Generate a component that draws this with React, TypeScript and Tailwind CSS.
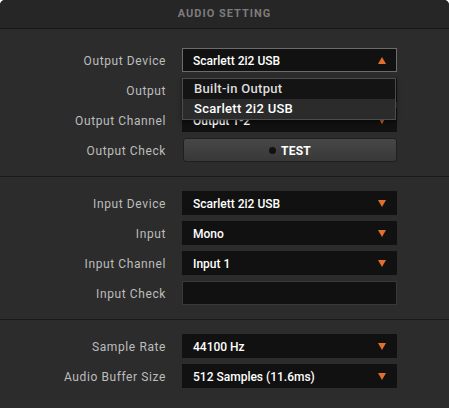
import React from "react";

const font = { fontFamily: "Roboto, 'Noto Sans', sans-serif" };

function Arrow({ up = false }: { up?: boolean }) {
  return (
    <svg width="8" height="7" viewBox="0 0 8 7" className="shrink-0">
      {up ? (
        <polygon points="4,0 8,7 0,7" fill="#e2702a" />
      ) : (
        <polygon points="0,0 8,0 4,7" fill="#e2702a" />
      )}
    </svg>
  );
}

function Label({ children }: { children: React.ReactNode }) {
  return (
    <div className="w-[166px] shrink-0 pt-[1px] text-right text-[12px] tracking-[0.6px] text-[#bdbdbd]">
      {children}
    </div>
  );
}

function Select({ value, open = false }: { value: string; open?: boolean }) {
  return (
    <div
      className={
        open
          ? "ml-[16px] flex h-[24px] w-[215px] items-center justify-between border border-[#6c6c6c] bg-[#111111] pl-[10px] pr-[10px]"
          : "ml-[16px] flex h-[24px] w-[215px] items-center justify-between bg-[#111111] pl-[11px] pr-[11px]"
      }
    >
      <span className="pt-[1px] text-[12px] font-medium text-white">{value}</span>
      <Arrow up={open} />
    </div>
  );
}

function Row({ label, children }: { label: string; children: React.ReactNode }) {
  return (
    <div className="flex h-[24px] items-center">
      <Label>{label}</Label>
      {children}
    </div>
  );
}

export default function App() {
  return (
    <div className="relative h-[408px] w-[449px] overflow-hidden rounded-t-[5px] bg-[#2c2c2c]" style={font}>
      <div className="flex h-[29px] items-center justify-center border-b border-[#171717] bg-[#262626]">
        <span className="pt-[1px] text-[11px] font-bold tracking-[1px] text-[#7c7c7c]">AUDIO SETTING</span>
      </div>

      <div className="flex flex-col gap-[6px] pt-[19px] pb-[14px]">
        <Row label="Output Device">
          <Select value="Scarlett 2i2 USB" open />
        </Row>
        <Row label="Output">
          <Select value="" />
        </Row>
        <Row label="Output Channel">
          <Select value="Output 1-2" />
        </Row>
        <div className="flex h-[24px] items-center">
          <Label>Output Check</Label>
          <button className="ml-[17px] flex h-[24px] w-[214px] items-center justify-center gap-[5px] rounded-[3px] border border-[#1f1f1f] bg-gradient-to-b from-[#474747] to-[#383838]">
            <span className="h-[7px] w-[7px] rounded-full bg-[#111111]" />
            <span className="pt-[1px] text-[12px] font-bold tracking-[0.3px] text-white">TEST</span>
          </button>
        </div>
      </div>

      <div className="border-t border-[#191919]" />

      <div className="flex flex-col gap-[6px] pt-[14px] pb-[14px]">
        <Row label="Input Device">
          <Select value="Scarlett 2i2 USB" />
        </Row>
        <Row label="Input">
          <Select value="Mono" />
        </Row>
        <Row label="Input Channel">
          <Select value="Input 1" />
        </Row>
        <Row label="Input Check">
          <div className="ml-[16px] h-[24px] w-[215px] border border-[#393939] bg-[#111111]" />
        </Row>
      </div>

      <div className="border-t border-[#191919]" />

      <div className="flex flex-col gap-[6px] pt-[14px]">
        <Row label="Sample Rate">
          <Select value="44100 Hz" />
        </Row>
        <Row label="Audio Buffer Size">
          <Select value="512 Samples (11.6ms)" />
        </Row>
      </div>

      <div className="absolute left-[182px] top-[78px] w-[214px] border border-[#4c4c4c] shadow-[0_2px_4px_rgba(0,0,0,0.5)]">
        <div className="flex h-[20px] items-center bg-[#141414] pl-[11px] text-[13px] font-medium tracking-[0.3px] text-[#dcdcdc]">
          Built-in Output
        </div>
        <div className="flex h-[20px] items-center bg-[#2b2b2b] pl-[11px] text-[13px] font-medium tracking-[0.3px] text-white">
          Scarlett 2i2 USB
        </div>
      </div>
    </div>
  );
}
